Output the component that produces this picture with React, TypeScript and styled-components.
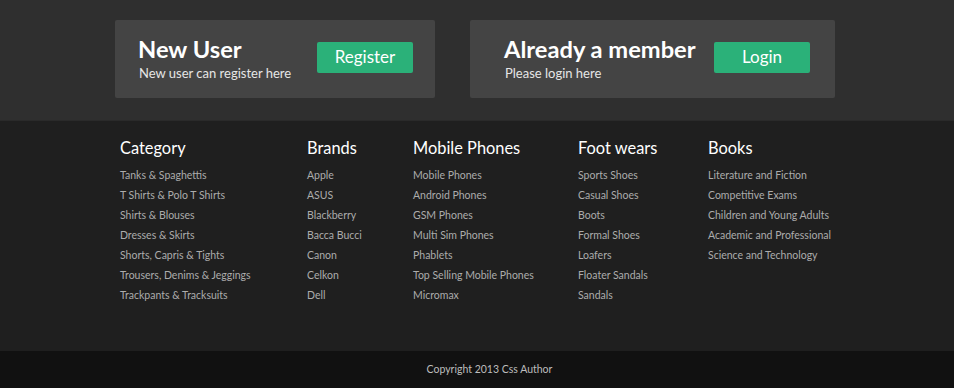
import React from "react";
import styled, { createGlobalStyle } from "styled-components";

const Global = createGlobalStyle`
  html, body { margin: 0; padding: 0; }
  body {
    background: #111;
    font-family: Lato, "Open Sans", sans-serif;
    -webkit-font-smoothing: antialiased;
  }
`;

const Page = styled.div`
  width: 954px;
  height: 388px;
  display: flex;
  flex-direction: column;
  overflow: hidden;
`;

const TopBand = styled.section`
  background: #2f2f2f;
  height: 121px;
  box-sizing: border-box;
  padding: 20px 0 0 115px;
  display: flex;
  gap: 35px;
  border-bottom: 1px solid #2a2a2a;
`;

const Box = styled.div<{ $w: number; $pl: number; $pr: number }>`
  width: ${(p) => p.$w}px;
  height: 78px;
  box-sizing: border-box;
  background: #444;
  border-radius: 2px;
  padding: 0 ${(p) => p.$pr}px 0 ${(p) => p.$pl}px;
  display: flex;
  align-items: center;
  justify-content: space-between;
`;

const BoxText = styled.div`
  display: flex;
  flex-direction: column;
  margin-top: -1px;
`;

const BoxTitle = styled.h2`
  margin: 0;
  color: #fff;
  font-size: 23.7px;
  font-weight: 700;
  line-height: 28px;
`;

const BoxSub = styled.p`
  margin: 1px 0 0 1px;
  color: #e6e6e6;
  font-size: 13px;
  line-height: 18px;
`;

const GreenButton = styled.button`
  width: 96px;
  height: 31px;
  border: none;
  border-radius: 2px;
  background: #2bb179;
  color: #fff;
  font-family: Lato, sans-serif;
  font-size: 17px;
  padding: 0 0 2px 0;
  margin-top: -3px;
  cursor: pointer;
`;

const Footer = styled.footer`
  background: #1f1f1f;
  height: 230px;
  box-sizing: border-box;
  padding: 15px 0 0 120px;
  display: flex;
`;

const Column = styled.div<{ $w: number }>`
  width: ${(p) => p.$w}px;
  display: flex;
  flex-direction: column;
`;

const ColTitle = styled.h3`
  margin: 0 0 5px 0;
  color: #fff;
  font-size: 16.4px;
  font-weight: 400;
  line-height: 24px;
`;

const LinkItem = styled.a`
  color: #acacac;
  font-size: 10.5px;
  line-height: 20px;
  text-decoration: none;
`;

const Bottom = styled.div`
  background: #111;
  flex: 1;
  display: flex;
  align-items: center;
  justify-content: center;
  padding: 0 0 1px 25px;
  color: #bdbdbd;
  font-size: 10.5px;
`;

const columns = [
  {
    title: "Category",
    w: 187,
    items: [
      "Tanks & Spaghettis",
      "T Shirts & Polo T Shirts",
      "Shirts & Blouses",
      "Dresses & Skirts",
      "Shorts, Capris & Tights",
      "Trousers, Denims & Jeggings",
      "Trackpants & Tracksuits",
    ],
  },
  {
    title: "Brands",
    w: 106,
    items: ["Apple", "ASUS", "Blackberry", "Bacca Bucci", "Canon", "Celkon", "Dell"],
  },
  {
    title: "Mobile Phones",
    w: 165,
    items: [
      "Mobile Phones",
      "Android Phones",
      "GSM Phones",
      "Multi Sim Phones",
      "Phablets",
      "Top Selling Mobile Phones",
      "Micromax",
    ],
  },
  {
    title: "Foot wears",
    w: 130,
    items: [
      "Sports Shoes",
      "Casual Shoes",
      "Boots",
      "Formal Shoes",
      "Loafers",
      "Floater Sandals",
      "Sandals",
    ],
  },
  {
    title: "Books",
    w: 160,
    items: [
      "Literature and Fiction",
      "Competitive Exams",
      "Children and Young Adults",
      "Academic and Professional",
      "Science and Technology",
    ],
  },
];

export default function App() {
  return (
    <Page>
      <Global />
      <TopBand>
        <Box $w={320} $pl={23} $pr={22}>
          <BoxText>
            <BoxTitle>New User</BoxTitle>
            <BoxSub>New user can register here</BoxSub>
          </BoxText>
          <GreenButton>Register</GreenButton>
        </Box>
        <Box $w={365} $pl={34} $pr={25}>
          <BoxText>
            <BoxTitle>Already a member</BoxTitle>
            <BoxSub>Please login here</BoxSub>
          </BoxText>
          <GreenButton>Login</GreenButton>
        </Box>
      </TopBand>
      <Footer>
        {columns.map((c) => (
          <Column key={c.title} $w={c.w}>
            <ColTitle>{c.title}</ColTitle>
            {c.items.map((i) => (
              <LinkItem key={i} href="#">
                {i}
              </LinkItem>
            ))}
          </Column>
        ))}
      </Footer>
      <Bottom>Copyright 2013 Css Author</Bottom>
    </Page>
  );
}
